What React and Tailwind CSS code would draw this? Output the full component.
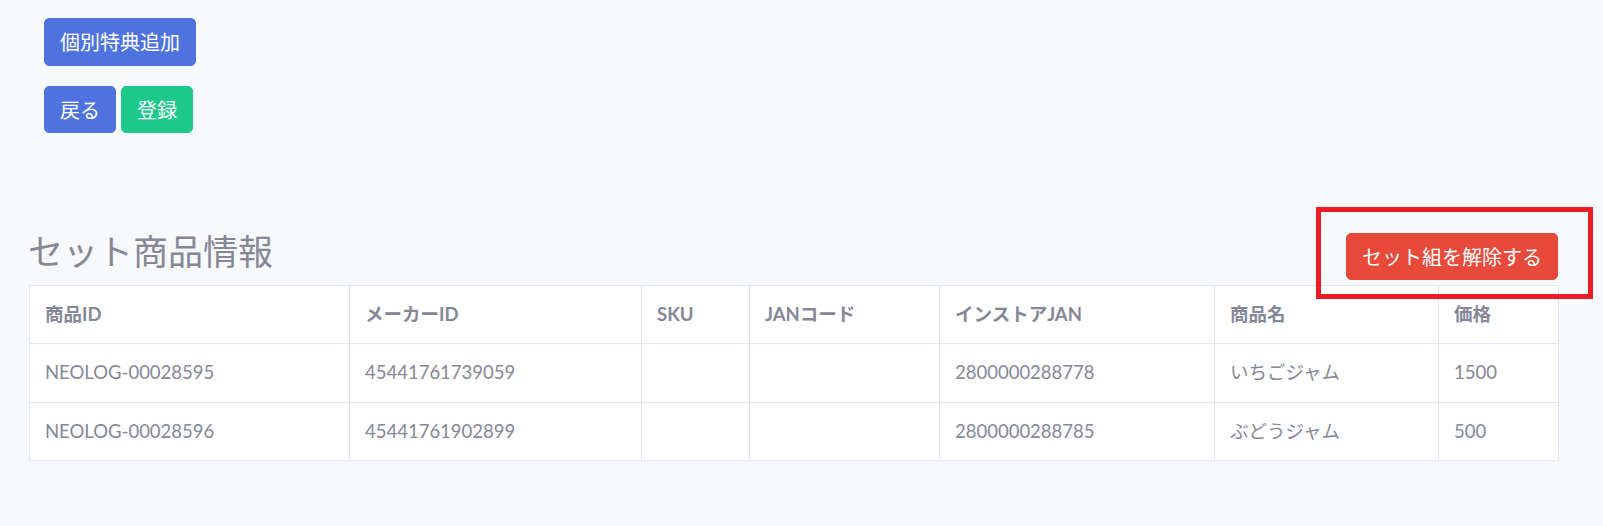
import React from 'react';

const rows = [
    { id: "NEOLOG-00028595", maker: "45441761739059", sku: "", jan: "", instore: "2800000288778", name: "いちごジャム", price: "1500" },
    { id: "NEOLOG-00028596", maker: "45441761902899", sku: "", jan: "", instore: "2800000288785", name: "ぶどうジャム", price: "500" },
];

const columns = [
    { label: "商品ID", key: "id", width: "w-[320px]" },
    { label: "メーカーID", key: "maker", width: "w-[292px]" },
    { label: "SKU", key: "sku", width: "w-[108px]" },
    { label: "JANコード", key: "jan", width: "w-[190px]" },
    { label: "インストアJAN", key: "instore", width: "w-[275px]" },
    { label: "商品名", key: "name", width: "w-[224px]" },
    { label: "価格", key: "price", width: "w-[120px]" },
];

const font = "font-['Lato','Noto_Sans_CJK_JP',sans-serif]";

export default function App() {
    return (
        <div className={`min-h-screen bg-[#f8f9fc] text-[#858796] ${font}`}>
            {/* action buttons */}
            <div className="pt-[18px] pl-[44px] font-['Noto_Sans_CJK_JP',sans-serif]">
                <div>
                    <button className="h-[48px] px-[15px] rounded-[5px] border border-[#4e73df] bg-[#4e73df] text-white text-[20px] leading-none">
                        個別特典追加
                    </button>
                </div>
                <div className="mt-[20px] flex gap-[5px]">
                    <button className="h-[47px] px-[15px] rounded-[5px] border border-[#4e73df] bg-[#4e73df] text-white text-[20px] leading-none">
                        戻る
                    </button>
                    <button className="h-[47px] px-[15px] rounded-[5px] border border-[#1cc88a] bg-[#1cc88a] text-white text-[20px] leading-none">
                        登録
                    </button>
                </div>
            </div>

            {/* set product info */}
            <div className="mt-[100px] ml-[29px] w-[1529px]">
                <div className="relative flex justify-between items-start mb-[5px]">
                    <h3 className="text-[35px] leading-[34px] font-normal font-['Noto_Sans_CJK_JP',sans-serif] -ml-[1px]">
                        セット商品情報
                    </h3>
                    <button className="h-[47px] px-[15px] rounded-[5px] border border-[#e74a3b] bg-[#e74a3b] text-white text-[20px] leading-none font-['Noto_Sans_CJK_JP',sans-serif]">
                        セット組を解除する
                    </button>
                    <div className="absolute right-[-35px] top-[-26px] w-[277px] h-[92px] border-[5px] border-[#ee1c25] pointer-events-none" />
                </div>

                <table className="w-full table-fixed border-collapse bg-white text-[18.5px]">
                    <thead>
                        <tr className="h-[58px]">
                            {columns.map((c) => (
                                <th key={c.key} className={`${c.width} border border-[#e3e6f0] px-[15px] text-left align-middle font-bold`}>
                                    {c.label}
                                </th>
                            ))}
                        </tr>
                    </thead>
                    <tbody>
                        {rows.map((r, i) => (
                            <tr key={r.id} className={i === 0 ? "h-[59px]" : "h-[58px]"}>
                                {columns.map((c) => (
                                    <td key={c.key} className="border border-[#e3e6f0] px-[15px] align-middle">
                                        {r[c.key]}
                                    </td>
                                ))}
                            </tr>
                        ))}
                    </tbody>
                </table>
            </div>
        </div>
    );
}
